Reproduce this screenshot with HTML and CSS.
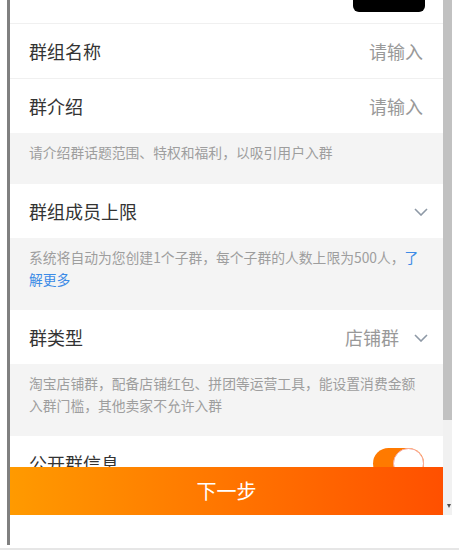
FILE: index.html
```html
<!DOCTYPE html>
<html lang="zh-CN">
<head>
<meta charset="utf-8">
<title>创建群组</title>
<link rel="stylesheet" href="styles.css">
</head>
<body>
<div class="frame">
  <div class="device">
    <div class="viewport">
      <div class="content">
        <div class="topbar"><div class="pill"></div></div>
        <div class="row row-line">
          <span class="label">群组名称</span>
          <span class="value">请输入</span>
        </div>
        <div class="row">
          <span class="label">群介绍</span>
          <span class="value">请输入</span>
        </div>
        <div class="hint">请介绍群话题范围、特权和福利，以吸引用户入群</div>
        <div class="row">
          <span class="label">群组成员上限</span>
          <svg class="chevron" width="14" height="8" viewBox="0 0 14 8"><polyline points="1,1 7,7 13,1" fill="none" stroke="#8e99a6" stroke-width="1.6"/></svg>
        </div>
        <div class="hint">系统将自动为您创建1个子群，每个子群的人数上限为500人，<a class="link" href="#">了解更多</a></div>
        <div class="row">
          <span class="label">群类型</span>
          <span class="value value-select">店铺群</span>
          <svg class="chevron" width="14" height="8" viewBox="0 0 14 8"><polyline points="1,1 7,7 13,1" fill="none" stroke="#8e99a6" stroke-width="1.6"/></svg>
        </div>
        <div class="hint">淘宝店铺群，配备店铺红包、拼团等运营工具，能设置消费金额入群门槛，其他卖家不允许入群</div>
        <div class="row">
          <span class="label">公开群信息</span>
          <span class="switch"><span class="knob"></span></span>
        </div>
      </div>
      <button class="next" type="button">下一步</button>
    </div>
    <div class="scrollbar">
      <div class="thumb"></div>
      <div class="track"><span class="arrow"></span></div>
    </div>
  </div>
</div>
<div class="baseline"></div>
</body>
</html>
```

FILE: styles.css
```css
* { box-sizing: border-box; }

html, body {
  margin: 0;
  padding: 0;
  background: #ffffff;
}

body {
  width: 459px;
  height: 551px;
  overflow: hidden;
  font-family: "Noto Sans CJK SC", "Noto Sans", sans-serif;
  color: #333333;
}

.frame {
  margin-left: 7px;
  height: 545px;
  border-left: 3px solid #808080;
  width: 445px;
}

.device {
  display: flex;
  height: 515px;
}

.viewport {
  position: relative;
  width: 433px;
  height: 515px;
  overflow: hidden;
  background: #ffffff;
}

.content {
  display: flex;
  flex-direction: column;
}

.topbar {
  height: 24px;
  border-bottom: 1px solid #f0f0f0;
  display: flex;
  justify-content: flex-end;
  padding-right: 18px;
}

.pill {
  width: 72px;
  height: 12px;
  background: #000000;
  border-radius: 0 0 6px 6px;
}

.row {
  height: 54px;
  flex: none;
  display: flex;
  align-items: center;
  padding: 0 20px 0 19px;
  background: #ffffff;
}

.row-line {
  height: 55px;
  border-bottom: 1px solid #f0f0f0;
}

.label {
  font-size: 18px;
  line-height: 24px;
  color: #333333;
  flex: 1;
}

.value {
  font-size: 18px;
  line-height: 24px;
  color: #999999;
}

.value-select {
  margin-right: 15px;
}

.chevron {
  display: block;
  margin-right: -5px;
  margin-top: 1px;
}

.hint {
  min-height: 51px;
  padding: 8px 22px 20px 19px;
  background: #f4f4f4;
  font-size: 13.8px;
  line-height: 22px;
  color: #9e9e9e;
}

.link {
  color: #3d8be6;
  text-decoration: none;
}

.switch {
  position: relative;
  width: 51px;
  height: 31px;
  border-radius: 16px;
  background: #ff7a00;
  margin-right: -1px;
}

.knob {
  position: absolute;
  right: 0;
  top: 0;
  width: 31px;
  height: 31px;
  border-radius: 50%;
  background: #ffffff;
  border: 1px solid #f7a9a0;
}

.next {
  position: absolute;
  left: 0;
  bottom: 0;
  width: 433px;
  height: 48px;
  border: 0;
  margin: 0;
  padding: 0;
  background: linear-gradient(to right, #ff9a00, #ff5000);
  color: #ffffff;
  font-family: "Noto Sans CJK SC", "Noto Sans", sans-serif;
  font-size: 20px;
  line-height: 48px;
}

.scrollbar {
  width: 9px;
  height: 515px;
  display: flex;
  flex-direction: column;
}

.thumb {
  height: 420px;
  background: #c1c1c1;
}

.track {
  flex: 1;
  background: #f1f1f1;
  display: flex;
  align-items: flex-end;
  justify-content: center;
  padding-bottom: 7px;
  padding-left: 2px;
}

.arrow {
  width: 0;
  height: 0;
  border-left: 2.5px solid transparent;
  border-right: 2.5px solid transparent;
  border-top: 4px solid #505050;
}

.baseline {
  margin-top: 3px;
  height: 3px;
  border-top: 2px solid #e6e6e6;
}
```
